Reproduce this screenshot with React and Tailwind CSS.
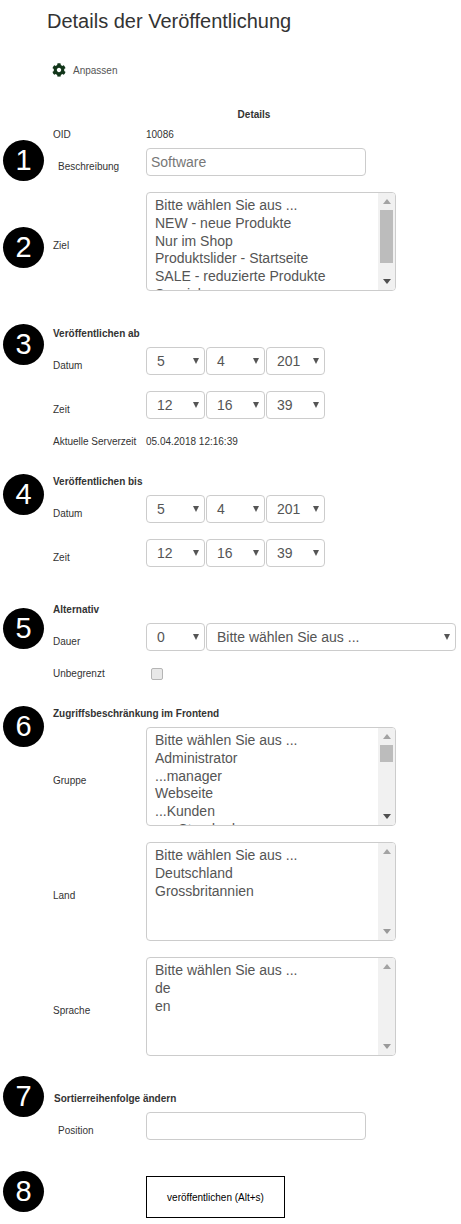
import React from "react";
import { FaCog } from "react-icons/fa";

function Badge({ n, className }) {
  return (
    <div className={`absolute left-[3px] w-[41px] h-[41px] rounded-full bg-black text-white flex items-center justify-center text-[29px] leading-none ${className}`}>
      {n}
    </div>
  );
}

function Row({ label, labelClass = "ml-[53px] w-[93px]", offset = "mt-[12px]", className = "", children }) {
  return (
    <div className={`relative flex items-start ${className}`}>
      <div className={`shrink-0 leading-[14px] ${labelClass} ${offset}`}>{label}</div>
      {children}
    </div>
  );
}

function Heading({ children, className = "ml-[53px]" }) {
  return <div className={`pt-[1px] font-bold leading-[14px] ${className}`}>{children}</div>;
}

function Arrow() {
  return (
    <svg width="6" height="6" viewBox="0 0 6 6" className="shrink-0">
      <path d="M0 0H6L3 6Z" fill="#555" />
    </svg>
  );
}

function Sel({ value, className = "w-[59px] pl-[10px]" }) {
  return (
    <div className={`h-[28px] border border-[#ccc] rounded-[4px] bg-white flex items-center justify-between pr-[5px] text-[14px] text-[#555] ${className}`}>
      <span>{value}</span>
      <Arrow />
    </div>
  );
}

function Triple({ a, b, c }) {
  return (
    <div className="flex gap-[1px]">
      <Sel value={a} />
      <Sel value={b} />
      <Sel value={c} />
    </div>
  );
}

function ListBox({ items, thumb, downClass = "fill-[#9a9a9a]" }) {
  return (
    <div className="w-[250px] h-[99px] border border-[#ccc] rounded-[4px] bg-white flex overflow-hidden">
      <div className="flex-1 pt-[4px] pl-[8px] text-[14px] leading-[17.75px] text-[#555] overflow-hidden">
        {items.map((t, i) => (
          <div key={i} className="whitespace-nowrap">{t}</div>
        ))}
      </div>
      <div className="w-[17px] bg-[#f1f1f1] flex flex-col items-center">
        <div className="h-[17px] flex items-center justify-center shrink-0">
          <svg width="8" height="5" viewBox="0 0 8 5"><path d="M0 5H8L4 0Z" className="fill-[#a3a3a3]" /></svg>
        </div>
        <div className="flex-1 w-full px-[2px]">
          {thumb && <div className={`bg-[#bcbcbc] w-full ${thumb}`} />}
        </div>
        <div className="h-[17px] flex items-center justify-center shrink-0">
          <svg width="8" height="5" viewBox="0 0 8 5"><path d="M0 0H8L4 5Z" className={downClass} /></svg>
        </div>
      </div>
    </div>
  );
}

function Input({ placeholder }) {
  return (
    <div className="w-[220px] h-[28px] border border-[#ccc] rounded-[4px] bg-white pl-[4px] text-[14px] leading-[26px] text-[#777]">
      {placeholder}
    </div>
  );
}

export default function App() {
  return (
    <div className="relative w-[461px] h-[1224px] overflow-hidden bg-white text-[10px] text-[#333] font-['Liberation_Sans',Arial,sans-serif]">
      <h1 className="pt-[7px] ml-[47px] text-[20px] leading-[28px] text-[#333]">Details der Veröffentlichung</h1>

      <div className="mt-[28px] ml-[52px] flex items-center h-[14px] text-[#555]">
        <FaCog className="w-[14px] h-[14px] text-[#12361a]" />
        <span className="ml-[7px]">Anpassen</span>
      </div>

      <div className="mt-[31px] ml-[146px] w-[216px] text-center font-bold leading-[14px]">Details</div>

      <div className="mt-[6px] flex leading-[14px]">
        <div className="ml-[53px] w-[93px]">OID</div>
        <div>10086</div>
      </div>

      <Row label="Beschreibung" labelClass="ml-[58px] w-[88px]" className="mt-[6px]">
        <Badge n="1" className="-top-[8px]" />
        <Input placeholder="Software" />
      </Row>

      <Row label="Ziel" offset="mt-[47px]" className="mt-[16px]">
        <Badge n="2" className="top-[35px]" />
        <ListBox
          items={["Bitte wählen Sie aus ...", "NEW - neue Produkte", "Nur im Shop", "Produktslider - Startseite", "SALE - reduzierte Produkte", "Spezial"]}
          thumb="h-[53px]"
          downClass="fill-[#505050]"
        />
      </Row>

      <div className="relative mt-[35px]">
        <Badge n="3" className="-top-[2px]" />
        <Heading>Veröffentlichen ab</Heading>
        <Row label="Datum" className="mt-[6px]">
          <Triple a="5" b="4" c="201" />
        </Row>
        <Row label="Zeit" className="mt-[16px]">
          <Triple a="12" b="16" c="39" />
        </Row>
        <div className="mt-[16px] flex leading-[14px]">
          <div className="ml-[53px] w-[93px]">Aktuelle Serverzeit</div>
          <div>05.04.2018 12:16:39</div>
        </div>
      </div>

      <div className="relative mt-[25px]">
        <Badge n="4" className="top-0" />
        <Heading>Veröffentlichen bis</Heading>
        <Row label="Datum" className="mt-[6px]">
          <Triple a="5" b="4" c="201" />
        </Row>
        <Row label="Zeit" className="mt-[16px]">
          <Triple a="12" b="16" c="39" />
        </Row>
      </div>

      <div className="relative mt-[35px]">
        <Badge n="5" className="top-[6px]" />
        <Heading>Alternativ</Heading>
        <Row label="Dauer" className="mt-[6px]">
          <div className="flex gap-[1px]">
            <Sel value="0" />
            <Sel value="Bitte wählen Sie aus ..." className="w-[250px] pl-[10px]" />
          </div>
        </Row>
        <Row label="Unbegrenzt" offset="mt-[1px]" className="mt-[15px]">
          <div className="mt-[2px] ml-[5px] w-[12px] h-[12px] rounded-[2px] border border-[#b5b5b5] bg-[#e8e8e8]" />
        </Row>
      </div>

      <div className="relative mt-[25px]">
        <Badge n="6" className="top-0" />
        <Heading>Zugriffsbeschränkung im Frontend</Heading>
        <Row label="Gruppe" offset="mt-[47px]" className="mt-[6px]">
          <ListBox
            items={["Bitte wählen Sie aus ...", "Administrator", "...manager", "Webseite", "...Kunden", "......Standard"]}
            thumb="h-[17px]"
            downClass="fill-[#505050]"
          />
        </Row>
        <Row label="Land" offset="mt-[47px]" className="mt-[16px]">
          <ListBox items={["Bitte wählen Sie aus ...", "Deutschland", "Grossbritannien"]} />
        </Row>
        <Row label="Sprache" offset="mt-[47px]" className="mt-[16px]">
          <ListBox items={["Bitte wählen Sie aus ...", "de", "en"]} />
        </Row>
      </div>

      <div className="relative mt-[35px]">
        <Badge n="7" className="-top-[15px]" />
        <Heading className="ml-[54px]">Sortierreihenfolge ändern</Heading>
        <Row label="Position" labelClass="ml-[58px] w-[88px]" className="mt-[6px]">
          <Input placeholder="" />
        </Row>
      </div>

      <div className="relative mt-[36px] ml-[146px]">
        <div className="absolute -left-[143px] -top-[5px] w-[41px] h-[41px] rounded-full bg-black text-white flex items-center justify-center text-[29px] leading-none">8</div>
        <button className="w-[139px] h-[42px] border border-black bg-white text-black text-[10px]">veröffentlichen (Alt+s)</button>
      </div>
    </div>
  );
}
